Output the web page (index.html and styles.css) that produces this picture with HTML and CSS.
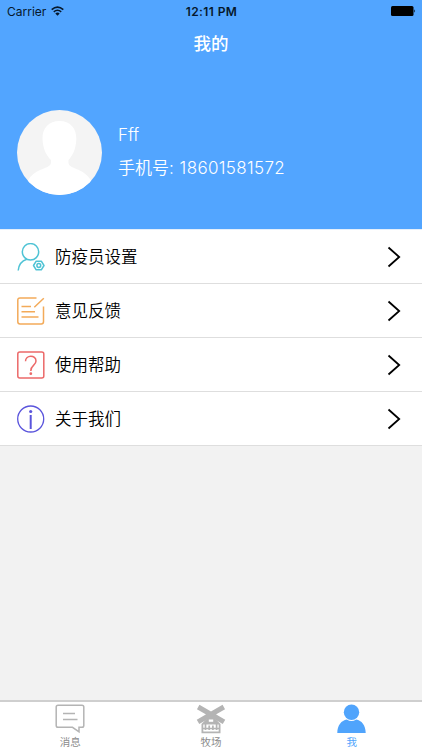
FILE: index.html
```html
<!DOCTYPE html>
<html lang="zh-CN">
<head>
  <meta charset="UTF-8">
  <title>我的</title>
  <meta name="viewport" content="width=device-width, initial-scale=1.0">
  <link rel="stylesheet" href="styles.css">
</head>
<body>
  <header class="top">
    <div class="status">
      <div class="carrier">
        <span>Carrier</span>
        <svg class="wifi" width="13" height="10" viewBox="0 0 13 10">
          <path d="M.7 3.6Q6.5 -1.5 12.3 3.6M2.8 5.9Q6.5 2.6 10.2 5.9" fill="none" stroke="#06182c" stroke-width="1.6"/>
          <path d="M4.3 7.4Q6.5 5.7 8.7 7.4L6.5 9.7Z" fill="#06182c"/>
        </svg>
      </div>
      <div class="time">12:11 PM</div>
      <svg class="battery" width="25" height="10" viewBox="0 0 25 10">
        <rect x="0" y="0" width="22.5" height="10" rx="1.5" fill="#000"/>
        <path d="M23.3 3.2Q25 5 23.3 6.8Z" fill="#000"/>
      </svg>
    </div>
    <h1>我的</h1>
    <div class="profile">
      <svg class="avatar" width="85" height="85" viewBox="0 0 85 85">
        <clipPath id="round"><circle cx="42.5" cy="42.5" r="42.5"/></clipPath>
        <g clip-path="url(#round)">
          <rect width="85" height="85" fill="#f4f4f4"/>
          <path d="M42.5 11C53 11 59.5 18 59.3 29C59 40 55 46 51.5 50V53C52 59 66 58 73 69L85 85H0L12 69C19 58 33 59 34 53V50C30 46 26 40 25.5 29C25 18 32 11 42.5 11Z" fill="#fff"/>
        </g>
      </svg>
      <div class="info">
        <div class="name">Fff</div>
        <div class="phone">手机号: <span>18601581572</span></div>
      </div>
    </div>
  </header>

  <main class="menu">
    <div class="row">
      <svg class="icon" width="28" height="28" viewBox="0 0 28 28" fill="none" stroke="#4fc3d5" stroke-width="1.5">
        <circle cx="13.5" cy="8.8" r="8.2"/>
        <path d="M9.8 16.3C4.5 18 1.7 22 1.2 27.5"/>
        <path d="M16.5 22.5L19.2 18.2H24.3L27 22.5L24.3 26.8H19.2Z" stroke-linejoin="round"/>
        <circle cx="21.8" cy="22.5" r="1.9"/>
      </svg>
      <span class="label">防疫员设置</span>
      <svg class="arrow" width="14" height="22" viewBox="0 0 14 22"><path d="M1.5 1.5L12.2 11L1.5 20.5"/></svg>
    </div>
    <div class="row">
      <svg class="icon" width="28" height="28" viewBox="0 0 28 28" fill="none" stroke="#f3aa59" stroke-width="1.5">
        <path d="M19.5 1H3Q.8 1 .8 3.2V24.8Q.8 27 3 27H24.3Q26.5 27 26.5 24.8V9.5"/>
        <path d="M17.3 10.3L26.8 1.3M4.5 9.6H14M4.5 14.8H18M4.5 20H21.5"/>
      </svg>
      <span class="label">意见反馈</span>
      <svg class="arrow" width="14" height="22" viewBox="0 0 14 22"><path d="M1.5 1.5L12.2 11L1.5 20.5"/></svg>
    </div>
    <div class="row">
      <svg class="icon" width="28" height="28" viewBox="0 0 28 28" fill="none" stroke="#ec6969" stroke-width="1.5">
        <rect x=".8" y="1" width="26" height="26" rx="2"/>
        <path d="M8.5 10.3C8.5 3.5 19 3.5 19 10C19 14.5 13.8 13.8 13.8 20"/>
        <circle cx="13.8" cy="22.7" r="1.4" fill="#ec6969" stroke="none"/>
      </svg>
      <span class="label">使用帮助</span>
      <svg class="arrow" width="14" height="22" viewBox="0 0 14 22"><path d="M1.5 1.5L12.2 11L1.5 20.5"/></svg>
    </div>
    <div class="row">
      <svg class="icon" width="28" height="28" viewBox="0 0 28 28" fill="none" stroke="#5a54dc" stroke-width="1.3">
        <circle cx="13.7" cy="14" r="13"/>
        <path d="M13.7 10V24" stroke-width="2"/>
        <circle cx="13.7" cy="6.5" r="1.6" fill="#5a54dc" stroke="none"/>
      </svg>
      <span class="label">关于我们</span>
      <svg class="arrow" width="14" height="22" viewBox="0 0 14 22"><path d="M1.5 1.5L12.2 11L1.5 20.5"/></svg>
    </div>
  </main>

  <nav class="tabs">
    <div class="tab">
      <svg width="30" height="30" viewBox="0 0 30 30" fill="none" stroke="#b4b4b4" stroke-width="1.5">
        <path d="M3 1.2H27Q28.8 1.2 28.8 3V21.5Q28.8 23.3 27 23.3H24V27.8L17.5 23.3H3Q1.2 23.3 1.2 21.5V3Q1.2 1.2 3 1.2Z"/>
        <path d="M8 9.5H20M8 15.5H22.5"/>
      </svg>
      <span>消息</span>
    </div>
    <div class="tab">
      <svg width="30" height="30" viewBox="0 0 30 30">
        <path d="M2.2 3L28 17.8M27.8 3L2 17.8" stroke="#b4b4b4" stroke-width="5"/>
        <path d="M15 12L20.5 16L24.5 20V29.3H5.5V20L9.5 16Z" fill="#b4b4b4"/>
        <rect x="12.8" y="15.5" width="4.4" height="2.3" fill="#fff"/>
        <rect x="7.3" y="20.5" width="15.4" height="7" fill="#fff"/>
        <path d="M7 24.5H23M9.5 20V26M13.2 21.5V26M16.9 21.5V26M20.6 20V26" stroke="#b4b4b4" stroke-width="1.7"/>
      </svg>
      <span>牧场</span>
    </div>
    <div class="tab active">
      <svg width="30" height="30" viewBox="0 0 30 30" fill="#50a4fc">
        <circle cx="14.5" cy="8.3" r="7.7"/>
        <path d="M.3 29C.3 21 4.5 16.5 9.8 15.5Q14.5 18.500 19.2 15.5C24.5 16.5 28.7 21 28.7 29Z"/>
      </svg>
      <span>我</span>
    </div>
  </nav>
</body>
</html>
```
FILE: styles.css
```css
* {
  box-sizing: border-box;
}
body {
  margin: 0;
  height: 100vh;
  display: flex;
  flex-direction: column;
  overflow: hidden;
  background: #f2f2f2;
  color: #000;
  font-family: Inter, "Noto Sans CJK SC", sans-serif;
}
.top {
  height: 229px;
  flex: none;
  background: #52a5ff;
  color: #fff;
}
.status {
  display: grid;
  grid-template-columns: 1fr auto 1fr;
  align-items: center;
  height: 22px;
  padding: 0 6px 0 7px;
  color: #06182c;
  font-size: 12px;
}
.carrier {
  display: flex;
  align-items: center;
  gap: 5px;
}
.time {
  font-weight: 600;
  letter-spacing: 0.4px;
}
.battery {
  justify-self: end;
}
h1 {
  margin: 0;
  height: 44px;
  font-size: 17.5px;
  font-weight: 500;
  line-height: 43px;
  text-align: center;
}
.profile {
  display: flex;
  gap: 16px;
  padding: 44px 0 0 17px;
}
.info {
  padding-top: 9px;
  font-size: 17px;
  font-weight: 350;
}
.name {
  height: 33px;
  line-height: 33px;
}
.phone {
  height: 33px;
  line-height: 33px;
  white-space: nowrap;
}
.phone span {
  margin-left: 1px;
  letter-spacing: 0.35px;
}
.menu {
  padding-top: 1px;
  background: #e4effb;
}
.row {
  display: flex;
  align-items: center;
  height: 54px;
  padding: 0 21px 0 17px;
  background: #fff;
  border-bottom: 1px solid #dedede;
}
.label {
  flex: 1;
  margin-left: 10px;
  padding-bottom: 1px;
  font-size: 16.5px;
  font-weight: 350;
}
.arrow {
  fill: none;
  stroke: #000;
  stroke-width: 1.8;
}
.tabs {
  display: flex;
  height: 50px;
  margin-top: auto;
  padding-top: 2px;
  background: #fff;
  border-top: 2px solid #cfcfcf;
}
.tab {
  flex: 1;
  display: flex;
  flex-direction: column;
  align-items: center;
  color: #8c8c8c;
  font-size: 10.5px;
  line-height: 17px;
}
.tab svg {
  flex: none;
}
.active {
  color: #50a4fc;
}
```
